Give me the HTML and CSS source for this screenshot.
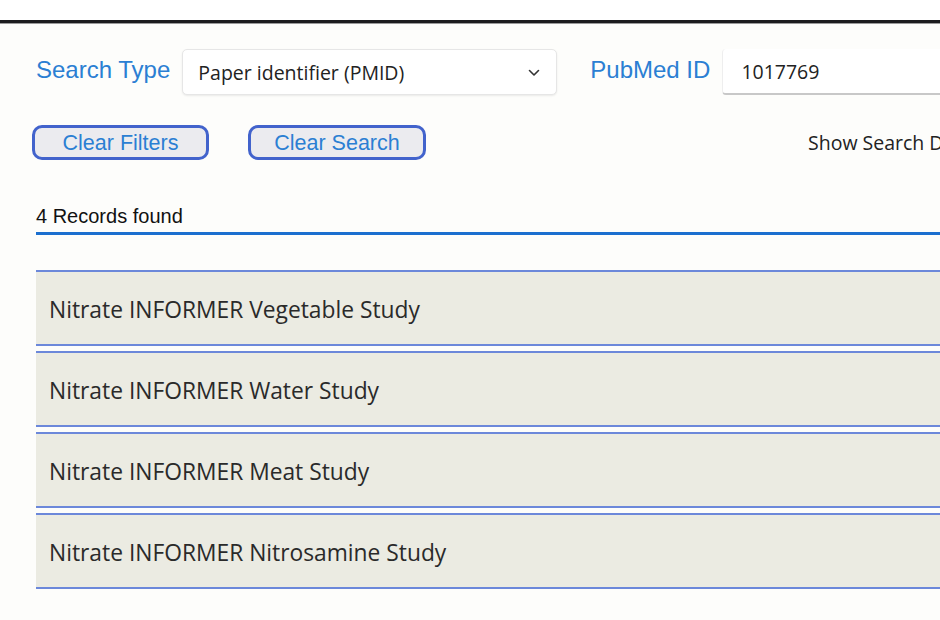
FILE: index.html
```html
<!DOCTYPE html>
<html>
<head>
<meta charset="utf-8">
<link rel="stylesheet" href="styles.css">
</head>
<body>
<div class="topband"></div>
<div class="rule"></div>
<main class="page">
  <div class="search-row">
    <label class="field-label">Search Type</label>
    <div class="select">
      <span>Paper identifier (PMID)</span>
      <svg class="chev" width="12" height="8" viewBox="0 0 12 8"><path d="M1.5 1.5 L6 6 L10.5 1.5" fill="none" stroke="#333" stroke-width="1.6" stroke-linecap="round" stroke-linejoin="round"/></svg>
    </div>
    <label class="field-label pub">PubMed ID</label>
    <div class="text-input">1017769</div>
  </div>
  <div class="button-row">
    <button class="btn">Clear Filters</button>
    <button class="btn">Clear Search</button>
    <span class="show-details">Show Search Details</span>
  </div>
  <div class="records">4 Records found</div>
  <ul class="results">
    <li class="result">Nitrate INFORMER Vegetable Study</li>
    <li class="result">Nitrate INFORMER Water Study</li>
    <li class="result">Nitrate INFORMER Meat Study</li>
    <li class="result">Nitrate INFORMER Nitrosamine Study</li>
  </ul>
</main>
</body>
</html>
```
FILE: styles.css
```css
html, body {
  margin: 0;
  padding: 0;
}
body {
  width: 940px;
  height: 620px;
  overflow: hidden;
  background: #fdfdfb;
  font-family: "Liberation Sans", Arial, sans-serif;
}
.topband {
  height: 20px;
  background: #ffffff;
}
.rule {
  height: 3px;
  background: #1c1c1e;
  border-bottom: 1px solid #9a9a9a;
}
.page {
  width: 1200px;
  padding: 25px 0 0 36px;
}
.search-row {
  display: flex;
  align-items: center;
  height: 46px;
}
.field-label {
  color: #2b7fd3;
  font-size: 24px;
  margin-right: 12px;
  position: relative;
  top: -2px;
}
.field-label.pub {
  margin-left: 33px;
}
.select {
  box-sizing: border-box;
  width: 375px;
  height: 46px;
  background: #fff;
  border: 1px solid #e6e6e6;
  border-radius: 5px;
  box-shadow: 0 1px 2px rgba(0,0,0,0.08);
  display: flex;
  align-items: center;
  justify-content: space-between;
  padding: 0 16px 0 15px;
  font-family: "Open Sans", "Noto Sans", sans-serif;
  font-size: 19.5px;
  color: #222;
}
.chev {
  display: block;
  margin-top: 2px;
}
.text-input {
  box-sizing: border-box;
  width: 400px;
  height: 46px;
  background: #fff;
  border-bottom: 2px solid #c8c8c8;
  border-left: 1px solid #eee;
  border-radius: 4px;
  display: flex;
  align-items: center;
  padding-left: 18px;
  font-family: "Open Sans", "Noto Sans", sans-serif;
  font-size: 19.5px;
  color: #222;
}
.button-row {
  display: flex;
  align-items: center;
  margin-top: 30px;
  margin-left: -4px;
}
.btn {
  box-sizing: border-box;
  height: 35px;
  width: 177px;
  border: 3px solid #4263cc;
  border-radius: 10px;
  background: #ebebef;
  color: #2b7fd3;
  font-family: "Liberation Sans", Arial, sans-serif;
  font-size: 21.5px;
  line-height: 1;
  padding: 3px 0 0 0;
  margin-right: 39px;
}
.btn + .btn {
  width: 178px;
  margin-right: 0;
}
.show-details {
  margin-left: 382px;
  font-family: "Open Sans", "Noto Sans", sans-serif;
  font-size: 19.5px;
  color: #222;
  white-space: nowrap;
}
.records {
  margin-top: 44px;
  font-size: 20px;
  line-height: 24px;
  color: #111;
  padding-bottom: 4px;
  border-bottom: 3px solid #1b6fcf;
}
.results {
  list-style: none;
  margin: 35px 0 0 0;
  padding: 0;
  display: flex;
  flex-direction: column;
  gap: 5px;
}
.result {
  box-sizing: content-box;
  height: 70px;
  padding: 2px 0 0 13px;
  background: #ebebe2;
  border-top: 2px solid #6c88da;
  border-bottom: 2px solid #6c88da;
  display: flex;
  align-items: center;
  font-family: "Open Sans", "Noto Sans", sans-serif;
  font-size: 22.8px;
  color: #2a2a2a;
}
```
